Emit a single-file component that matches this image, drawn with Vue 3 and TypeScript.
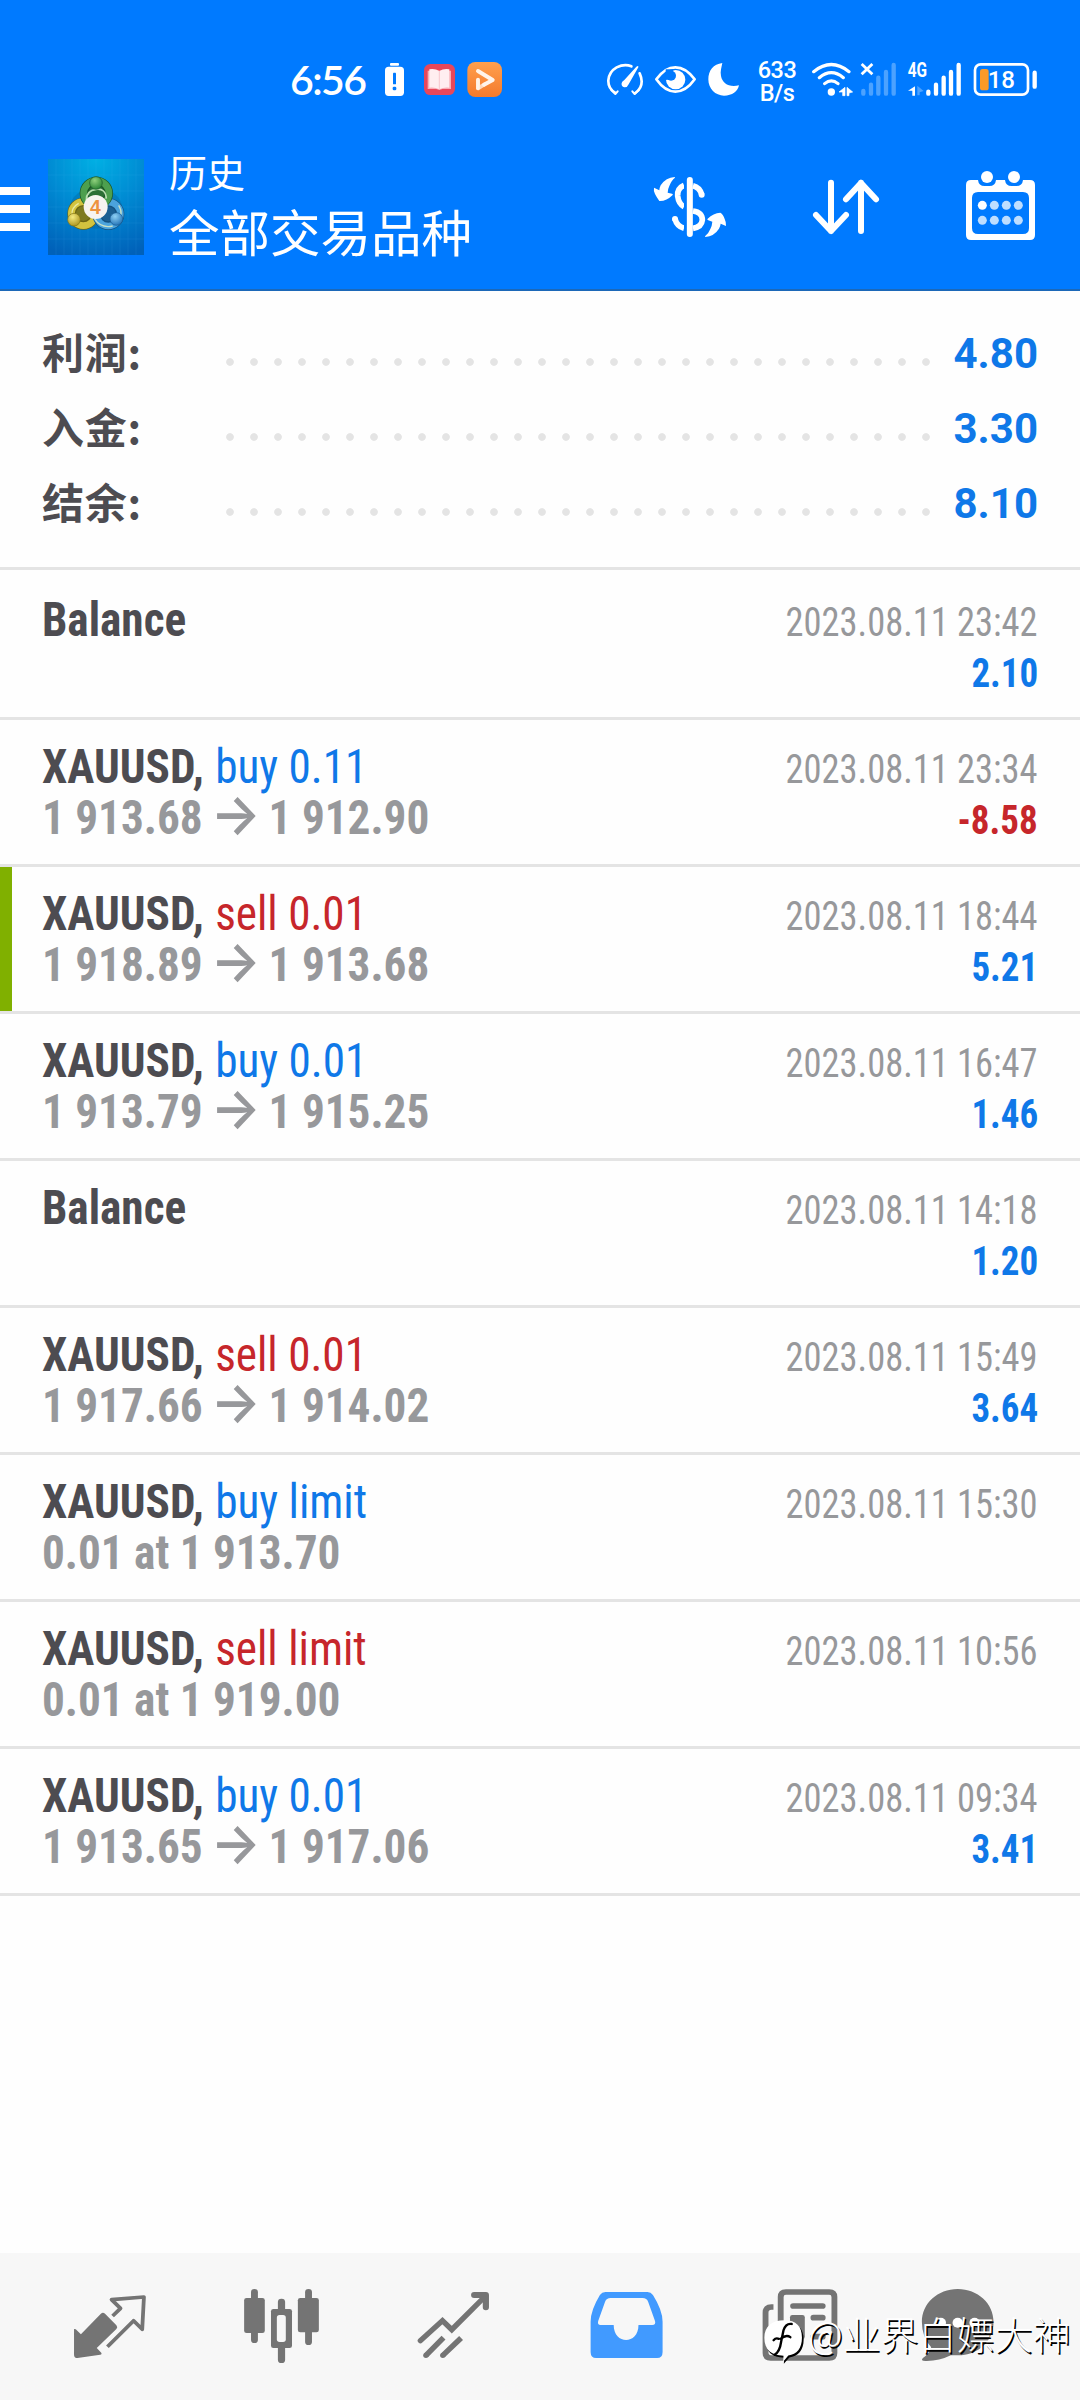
<script setup lang="ts">
interface Summary {
  label: string
  value: string
}

interface Deal {
  symbol: string
  side?: 'buy' | 'sell'
  action?: string
  from?: string
  to?: string
  note?: string
  time: string
  profit?: string
  marked?: boolean
}

const summary: Summary[] = [
  { label: '利润:', value: '4.80' },
  { label: '入金:', value: '3.30' },
  { label: '结余:', value: '8.10' },
]

const deals: Deal[] = [
  { symbol: 'Balance', time: '2023.08.11 23:42', profit: '2.10' },
  { symbol: 'XAUUSD,', side: 'buy', action: 'buy 0.11', from: '1 913.68', to: '1 912.90', time: '2023.08.11 23:34', profit: '-8.58' },
  { symbol: 'XAUUSD,', side: 'sell', action: 'sell 0.01', from: '1 918.89', to: '1 913.68', time: '2023.08.11 18:44', profit: '5.21', marked: true },
  { symbol: 'XAUUSD,', side: 'buy', action: 'buy 0.01', from: '1 913.79', to: '1 915.25', time: '2023.08.11 16:47', profit: '1.46' },
  { symbol: 'Balance', time: '2023.08.11 14:18', profit: '1.20' },
  { symbol: 'XAUUSD,', side: 'sell', action: 'sell 0.01', from: '1 917.66', to: '1 914.02', time: '2023.08.11 15:49', profit: '3.64' },
  { symbol: 'XAUUSD,', side: 'buy', action: 'buy limit', note: '0.01 at 1 913.70', time: '2023.08.11 15:30' },
  { symbol: 'XAUUSD,', side: 'sell', action: 'sell limit', note: '0.01 at 1 919.00', time: '2023.08.11 10:56' },
  { symbol: 'XAUUSD,', side: 'buy', action: 'buy 0.01', from: '1 913.65', to: '1 917.06', time: '2023.08.11 09:34', profit: '3.41' },
]

const isLoss = (profit: string): boolean => profit.startsWith('-')
</script>

<template>
  <div class="screen">
    <header class="top">
      <div class="status">
        <div class="status-left">
          <span class="clock">6:56</span>
          <svg class="s-alert" viewBox="342 63 63 111" width="21" height="37">
            <rect x="360" y="69" width="27" height="8" rx="3" fill="#fff" />
            <rect x="345" y="80" width="57" height="88" rx="11" fill="#fff" />
            <rect x="369" y="98" width="9" height="35" rx="2" fill="#007aff" />
            <rect x="368" y="140" width="11" height="11" rx="4" fill="#007aff" />
          </svg>
          <svg class="s-book" viewBox="459 63 99 111" width="33" height="37">
            <rect x="462" y="72" width="93" height="93" rx="19" fill="#e8475a" />
            <path d="M473 92h70v55h-26l-9 3-9-3h-26z" fill="#f9aeb6" />
            <path d="M478 88q17-3 30 5v55q-13-7-30-5zM538 88q-17-3-30 5v55q13-7 30-5z" fill="#ffeef0" />
            <path d="M508 93v55" stroke="#f5b5bd" stroke-width="2" />
          </svg>
          <svg class="s-play" viewBox="591 63 108 111" width="36" height="37">
            <defs>
              <linearGradient id="og" x1="0" y1="0" x2="0" y2="1">
                <stop offset="0" stop-color="#ffa04e" />
                <stop offset="1" stop-color="#f47a2c" />
              </linearGradient>
            </defs>
            <rect x="592" y="66" width="104" height="105" rx="24" fill="url(#og)" />
            <path d="M624 121v24l18-11" fill="none" stroke="#ffd9bd" stroke-width="12" stroke-linejoin="round" stroke-linecap="round" />
            <path d="M624 93l44 27-26 14" fill="none" stroke="#fff4ea" stroke-width="12" stroke-linejoin="round" stroke-linecap="round" />
            <path d="M624 119v26" stroke="#fff4ea" stroke-width="11" stroke-linecap="round" />
          </svg>
        </div>
        <div class="status-right">
          <svg viewBox="48 54 114 132" width="38" height="44">
            <path d="M75 158Q54 146 55 121Q57 95 80 82Q104 70 124 79M149 100Q160 124 151 142Q146 152 136 159" fill="none" stroke="#fff" stroke-width="8" stroke-linecap="round" />
            <path d="M64 150l12 12 7-8M146 150l-12 12-7-8" fill="none" stroke="#fff" stroke-width="6" stroke-linejoin="round" stroke-linecap="round" />
            <path d="M145 82l-29 51q-4 10-13 9-10-3-8-13 1-5 8-9l36-40q7-5 6 2z" fill="#fff" />
          </svg>
          <svg class="s-eye" viewBox="192 54 129 132" width="43" height="44">
            <path d="M199 118Q225 82 256 82Q288 82 314 118Q288 155 256 155Q225 155 199 118z" fill="none" stroke="#fff" stroke-width="8" stroke-linejoin="round" />
            <circle cx="257" cy="119" r="29" fill="#fff" />
            <circle cx="243" cy="107" r="15" fill="#007aff" />
            <path d="M227 88h24l-10 30-14 2z" fill="#007aff" />
          </svg>
          <svg class="s-moon" viewBox="351 54 99 132" width="33" height="44">
            <path d="M397 69C370 72 355 92 355 118c0 28 21 49 47 49 25 0 41-12 45-31-30 7-50-6-54-28-3-15 2-27 4-39z" fill="#fff" />
          </svg>
          <div class="speed"><span>633</span><span>B/s</span></div>
          <svg class="s-wifi" viewBox="666 54 126 132" width="42" height="44">
            <path d="M671 95Q724 52 777 95M688 113Q724 83 760 113M704 131Q724 114 744 131" fill="none" stroke="#fff" stroke-width="9.500" stroke-linecap="round" />
            <circle cx="724" cy="156" r="11" fill="#fff" />
            <path d="M765 142v25h-7v-11h-11zM771 142v25h6v-8l11-3z" fill="#fff" stroke="#fff" stroke-width="2" />
          </svg>
          <svg class="s-sig1" viewBox="810 54 111 132" width="37" height="44">
            <path d="M818 75l26 25M844 75l-26 25" stroke="#fff" stroke-width="8.500" stroke-linecap="square" />
            <path d="M820 153v8M843 134v27M865 113v48M888 96v65M911 75v86" stroke="#4ca2ff" stroke-width="13" stroke-linecap="round" />
          </svg>
          <svg class="s-sig2" viewBox="951 54 165 132" width="55" height="44">
            <text x="953" y="111" class="g4" textLength="58" lengthAdjust="spacingAndGlyphs">4G</text>
            <path d="M975 139v28h-8v-15h-13z" fill="#fff" />
            <path d="M982 137v29h7v-9l12-4z" fill="#4ca2ff" />
            <path d="M1015 155v6M1038 134v27M1061 113v48M1083 96v65M1106 75v86" stroke="#fff" stroke-width="13" stroke-linecap="round" />
          </svg>
          <svg class="s-bat" viewBox="1149 54 195 132" width="65" height="44">
            <rect x="1155" y="73" width="159" height="91" rx="17" fill="none" stroke="#fff" stroke-width="8" />
            <rect x="1170" y="87" width="26" height="64" rx="8" fill="#fb9a27" />
            <path d="M1334 98v42" stroke="#fff" stroke-width="13" stroke-linecap="round" />
            <text x="1193" y="144" class="pct" textLength="82" lengthAdjust="spacingAndGlyphs">18</text>
          </svg>
        </div>
      </div>
      <div class="toolbar">
        <div class="burger"><i></i><i></i><i></i></div>
        <svg class="logo" viewBox="24 27 288 288" width="96" height="96">
          <defs>
            <radialGradient id="lb" cx=".5" cy="0" r="1.05">
              <stop offset="0" stop-color="#00b0e4" />
              <stop offset=".5" stop-color="#0089d2" />
              <stop offset="1" stop-color="#0061b9" />
            </radialGradient>
            <radialGradient id="gg" cx=".4" cy=".3" r=".8"><stop offset="0" stop-color="#8fd07c" /><stop offset="1" stop-color="#1d7a2b" /></radialGradient>
            <radialGradient id="yg" cx=".4" cy=".3" r=".8"><stop offset="0" stop-color="#f4ea80" /><stop offset="1" stop-color="#a68c14" /></radialGradient>
            <radialGradient id="bg" cx=".4" cy=".3" r=".8"><stop offset="0" stop-color="#8fd0f4" /><stop offset="1" stop-color="#1769b0" /></radialGradient>
          </defs>
          <rect x="24" y="27" width="288" height="288" fill="url(#lb)" />
          <path d="M48 27v288M72 27v288M96 27v288M120 27v288M144 27v288M168 27v288M192 27v288M216 27v288M240 27v288M264 27v288M288 27v288M24 75h288M24 123h288M24 171h288M24 219h288M24 267h288" stroke="#5cc4f0" stroke-opacity=".2" stroke-width="1.5" />
          <ellipse cx="168" cy="174" rx="78" ry="62" fill="#024f83" opacity=".25" />
          <circle cx="130" cy="191" r="35" fill="#7d7a20" stroke="#6d6513" stroke-width="26" />
          <circle cx="130" cy="191" r="36" fill="none" stroke="#d2c33f" stroke-width="20" />
          <circle cx="205" cy="192" r="35" fill="#1b5f92" stroke="#135282" stroke-width="26" />
          <circle cx="205" cy="192" r="36" fill="none" stroke="#4ba3dc" stroke-width="20" />
          <circle cx="169" cy="130" r="37" fill="#2c6f35" stroke="#1b5728" stroke-width="26" />
          <circle cx="169" cy="130" r="38" fill="none" stroke="#4d9f4e" stroke-width="20" />
          <path d="M139 150q0-28 29-32t31 28" fill="none" stroke="#b9deb0" stroke-width="5" />
          <path d="M116 160q-22 12-20 35M218 228q-35 8-55-22M236 166q9 14 7 28" fill="none" stroke="#f2f5c0" stroke-opacity=".75" stroke-width="4" />
          <circle cx="168" cy="99" r="19" fill="url(#gg)" stroke="#1b5728" stroke-width="2" />
          <circle cx="102" cy="209" r="19" fill="url(#yg)" stroke="#847413" stroke-width="2" />
          <circle cx="229" cy="207" r="19" fill="url(#bg)" stroke="#195b91" stroke-width="2" />
          <circle cx="167" cy="171" r="36" fill="#f6f3f0" />
          <text x="166" y="192" class="four">4</text>
        </svg>
        <div class="titles">
          <span class="t1">历史</span>
          <span class="t2">全部交易品种</span>
        </div>
        <div class="tools">
          <svg viewBox="96 87 225 216" width="75" height="72">
            <path d="M164 111Q138 112 122 136Q119 142 118 151L102 143Q100 153 105 162Q110 172 118 183Q139 184 158 165Q160 162 156 161L143 158Q143 148 148 138Q154 121 165 113z" fill="#fff" />
            <path d="M256 291Q282 289 297 266Q301 259 302 251L318 258Q319 247 314 237Q310 223 301 218Q280 219 263 236Q260 240 265 241L277 245Q276 258 271 267Q265 282 255 289z" fill="#fff" />
            <path d="M192 136Q171 145 173 168Q176 192 192 200M219 137Q239 142 245 163M165 237Q171 259 192 265M219 213Q247 217 247 240Q245 261 219 265" fill="none" stroke="#fff" stroke-width="17" />
            <circle cx="245" cy="164" r="9" fill="#fff" />
            <circle cx="165" cy="237" r="9" fill="#fff" />
            <path d="M192 120h8v160h-8zM219 120h8v5h-8z" fill="#007aff" />
            <path d="M209.500 120v162" stroke="#fff" stroke-width="18" stroke-linecap="round" />
          </svg>
          <svg viewBox="576 87 204 216" width="68" height="72">
            <path d="M633 128v145M588 225l45 48 45-48M723 273V128M678 178l45-49 45 49" fill="none" stroke="#fff" stroke-width="18" stroke-linecap="round" stroke-linejoin="round" />
          </svg>
          <svg viewBox="1035 87 213 216" width="71" height="72">
            <path fill-rule="evenodd" d="M1053 120h21q2 18 20 18h14q18 0 20-18h27q2 18 20 18h14q18 0 20-18h21q15 0 15 15v150q0 15-15 15h-177q-15 0-15-15V135q0-15 15-15zM1074 156q-18 0-18 18v90q0 18 18 18h135q18 0 18-18v-90q0-18-18-18z" fill="#fff" />
            <circle cx="1101" cy="111" r="18" fill="#fff" />
            <circle cx="1182" cy="111" r="18" fill="#fff" />
            <circle cx="1087" cy="196" r="13.500" fill="#fff" />
            <g fill="#bfdeff">
              <circle cx="1123" cy="196" r="13.500" /><circle cx="1159" cy="196" r="13.500" /><circle cx="1195" cy="196" r="13.500" />
              <circle cx="1087" cy="241" r="13.500" /><circle cx="1123" cy="241" r="13.500" /><circle cx="1159" cy="241" r="13.500" /><circle cx="1195" cy="241" r="13.500" />
            </g>
          </svg>
        </div>
      </div>
    </header>

    <section class="summary">
      <div v-for="item in summary" :key="item.label" class="sum-row">
        <span class="sum-label">{{ item.label }}</span>
        <span class="dots"></span>
        <span class="sum-value">{{ item.value }}</span>
      </div>
    </section>

    <main class="list">
      <article v-for="(deal, i) in deals" :key="i" class="deal" :class="{ marked: deal.marked }">
        <div class="line">
          <div class="cell">
            <span class="symbol">{{ deal.symbol }}</span>
            <span v-if="deal.action" class="action" :class="deal.side">{{ deal.action }}</span>
          </div>
          <time class="time">{{ deal.time }}</time>
        </div>
        <div class="line">
          <div class="cell prices">
            <template v-if="deal.from">
              <span>{{ deal.from }}</span><span class="arrow">→</span><span>{{ deal.to }}</span>
            </template>
            <span v-else-if="deal.note">{{ deal.note }}</span>
          </div>
          <span v-if="deal.profit" class="profit" :class="{ loss: isLoss(deal.profit) }">{{ deal.profit }}</span>
        </div>
      </article>
    </main>

    <nav class="nav">
      <svg viewBox="203.3 141 232.3 240" preserveAspectRatio="none">
        <path d="M293 221q6-5 12 0l33 35q5 6 0 11l-57 57 13 14q3 5-3 6l-66 10q-10 0-10-10v-77l5 1 15 15z" fill="#747474" />
        <path d="M327 228l23-23-26-26 94-8-5 97-25-26-76 78" fill="none" stroke="#747474" stroke-width="11" stroke-linejoin="round" />
      </svg>
      <svg viewBox="702.8 141 232.3 240" preserveAspectRatio="none">
        <g fill="#747474">
          <rect x="729" y="147" width="20" height="162" rx="10" /><rect x="709" y="174" width="60" height="105" rx="7" />
          <rect x="886" y="147" width="20" height="168" rx="10" /><rect x="865" y="174" width="61" height="103" rx="7" />
          <rect x="807" y="176" width="21" height="193" rx="10" /><rect x="787" y="207" width="61" height="117" rx="7" />
        </g>
        <rect x="804" y="225" width="26" height="81" rx="8" fill="#f7f7f7" />
      </svg>
      <svg viewBox="1202.3 141 232.3 240" preserveAspectRatio="none">
        <path d="M1221 302l64-60 27 27 95-98" fill="none" stroke="#747474" stroke-width="16" stroke-linecap="round" stroke-linejoin="miter" />
        <path d="M1377 165h34v37" fill="none" stroke="#747474" stroke-width="18" stroke-linecap="round" stroke-linejoin="round" />
        <path d="M1390 170h20v22z" fill="#747474" />
        <path d="M1237 346l51-53M1286 346l53-52" stroke="#747474" stroke-width="16" />
        <circle cx="1237" cy="346" r="8" fill="#747474" /><circle cx="1286" cy="346" r="8" fill="#747474" />
      </svg>
      <svg viewBox="133.6 141 232.3 240" preserveAspectRatio="none">
        <path fill-rule="evenodd" d="M190 156h122q10 0 16 9 28 46 28 80v91q0 18-16 18H163q-16 0-16-18v-91q0-34 27-80 6-9 16-9zM205 174q-12 0-16 11l-20 58q-3 12 7 12h38c0 60 72 60 72 0h40q11 0 8-12l-20-58q-4-11-16-11z" fill="#419aff" />
      </svg>
      <svg viewBox="633.1 141 232.3 240" preserveAspectRatio="none">
        <path d="M678 201h-6q-17 0-17 17v121q0 15 15 15h170q15 0 15-15V171q0-15-15-15H714q-15 0-15 15v165q0 14-14 18" fill="none" stroke="#747474" stroke-width="17" />
        <path d="M735 198h86M794 233h27M794 290h27" stroke="#747474" stroke-width="17" stroke-linecap="round" />
        <rect x="726" y="225" width="43" height="72" rx="7" fill="#747474" />
      </svg>
      <svg class="chat" viewBox="1097.7 141 232.3 240" preserveAspectRatio="none">
        <path d="M1213 147c58 0 104 43 104 99 0 59-46 100-104 100h-20q-35 18-74 17-15 0-7-9 20-14 24-32-27-31-27-76c0-56 46-99 104-99z" fill="#747474" />
        <circle cx="1164" cy="248" r="15" fill="#fff" /><circle cx="1213" cy="248" r="15" fill="#fff" /><circle cx="1262" cy="248" r="15" fill="#fff" />
      </svg>
      <div class="mark">
        <svg viewBox="648 238 120 136" width="41" height="45" preserveAspectRatio="none">
          <path d="M711 244c34 0 53 18 53 52 0 33-17 52-42 54l-16 19 1-18c-36 0-54-18-54-54 0-35 22-53 58-53z" fill="#000" transform="translate(3 4)" />
          <path d="M711 242c34 0 51 18 51 52 0 33-15 52-40 54l-15 19 1-18c-36 0-56-18-56-54 0-35 22-53 59-53z" fill="#fff" />
          <path d="M679 302q7-8 15-4M682 346q15-9 19-39l7-35q7-22 24-19M699 298q17-14 29-5" fill="none" stroke="#000" stroke-width="7" stroke-linecap="round" />
        </svg>
        <span>@业界白嫖大神</span>
      </div>
    </nav>
  </div>
</template>

<style>
body {
  margin: 0;
  background: #fefefe;
}
</style>

<style scoped>
.screen {
  width: 1080px;
  height: 2400px;
  display: flex;
  flex-direction: column;
  overflow: hidden;
  background: #fefefe;
  font-family: "Roboto Condensed", Roboto, "Noto Sans CJK SC", sans-serif;
}
svg {
  display: block;
  flex: none;
}
.top {
  box-sizing: border-box;
  height: 291px;
  background: #007aff;
  border-bottom: 2px solid #1c68b8;
}
.status {
  height: 120px;
  display: flex;
  justify-content: space-between;
  padding: 0 42px 0 290px;
}
.status-left {
  display: flex;
  align-items: flex-start;
  padding-top: 61px;
}
.clock {
  width: 94px;
  margin-top: -6px;
  font: 600 41px/50px Lato, sans-serif;
  letter-spacing: -1.6px;
  color: #fff;
}
.s-book {
  margin-left: 18px;
}
.s-play {
  margin-left: 11px;
}
.status-right {
  display: flex;
  padding-top: 58px;
}
.s-eye,
.s-moon {
  margin-left: 10px;
}
.speed {
  width: 42px;
  margin: 0 0 0 16px;
  padding-top: 1px;
  display: flex;
  flex-direction: column;
  align-items: center;
  font: 500 23.5px/22.5px Roboto, sans-serif;
  letter-spacing: -0.5px;
  color: #fff;
}
.s-wifi {
  margin-left: 14px;
}
.s-sig1 {
  margin-left: 6px;
}
.s-sig2 {
  margin-left: 10px;
}
.s-bat {
  margin-left: 11px;
}
.g4 {
  font: 700 58px Roboto, sans-serif;
  fill: #fff;
}
.pct {
  font: 500 72px Roboto, sans-serif;
  fill: #fff;
}
.toolbar {
  display: flex;
  align-items: flex-start;
}
.burger {
  width: 30px;
  margin-top: 67px;
  display: flex;
  flex-direction: column;
  gap: 10px;
}
.burger i {
  height: 8px;
  background: #fff;
}
.logo {
  margin: 39px 0 0 18px;
}
.four {
  font: 700 58px "Liberation Sans", sans-serif;
  fill: #ed923e;
  text-anchor: middle;
}
.titles {
  flex: 1;
  display: flex;
  flex-direction: column;
  padding: 26px 0 0 25px;
  color: #fff;
  font-family: "Noto Sans CJK SC", sans-serif;
}
.t1 {
  font-size: 38px;
  line-height: 49px;
}
.t2 {
  font-size: 50.5px;
  line-height: 70px;
}
.tools {
  display: flex;
  gap: 85px;
  padding: 49px 44px 0 0;
}
.summary {
  box-sizing: border-box;
  height: 279px;
  padding: 25px 42px 0;
  border-bottom: 3px solid #e4e4e4;
}
.sum-row {
  display: flex;
  height: 75px;
  align-items: flex-start;
}
.sum-label {
  width: 184px;
  font: 700 42px/70px "Noto Sans CJK SC", sans-serif;
  letter-spacing: 0.8px;
  color: #4d4c51;
}
.dots {
  width: 720px;
  height: 8px;
  margin: 42px 0 0 -8px;
  background: radial-gradient(circle at 12px 4px, #e4e4e4 3.4px, transparent 4.2px) 0 0 / 24px 8px;
}
.sum-value {
  flex: 1;
  text-align: right;
  font: 700 42px/76px Roboto, sans-serif;
  color: #0f78e8;
}
.list {
  padding-top: 3px;
}
.deal {
  box-sizing: border-box;
  height: 147px;
  padding: 21px 42px 0;
  border-bottom: 3px solid #e4e4e4;
}
.marked {
  box-shadow: inset 12px 0 #80b000;
}
.line {
  display: flex;
  justify-content: space-between;
  align-items: baseline;
  height: 51px;
  font-size: 48px;
  line-height: 51px;
  font-stretch: 75%;
  white-space: nowrap;
}
.cell {
  display: flex;
  align-items: baseline;
  transform: scaleX(0.942);
  transform-origin: left;
}
.cell::before {
  content: "\200b";
}
.symbol {
  font-weight: 700;
  color: #4d4c51;
}
.action {
  margin-left: 12px;
}
.buy {
  color: #0f78e8;
}
.sell {
  color: #c6262b;
}
.prices {
  font-weight: 700;
  color: #97989b;
}
.arrow {
  width: 70px;
  display: flex;
  justify-content: center;
  font-family: Inter, sans-serif;
  font-size: 56px;
  font-weight: 600;
  line-height: 0;
}
.time {
  font-size: 40px;
  color: #97989b;
  transform: scaleX(0.911);
  transform-origin: right;
}
.profit {
  font-size: 40px;
  font-weight: 700;
  color: #0f78e8;
  transform: scaleX(0.925);
  transform-origin: right;
}
.loss {
  color: #c6262b;
}
.nav {
  position: relative;
  box-sizing: border-box;
  height: 147px;
  margin-top: auto;
  padding: 34px 0 0 70px;
  display: flex;
  gap: 92px;
  background: #f7f7f7;
}
.nav > svg {
  width: 80px;
  height: 80px;
}
.nav > .chat {
  margin-left: -12px;
}
.mark {
  position: absolute;
  left: 763px;
  top: 66px;
  display: flex;
  white-space: nowrap;
}
.mark span {
  margin: -6px 0 0 4px;
  font: 300 38px/40px "Noto Sans CJK SC", sans-serif;
  color: #fff;
  text-shadow: 1.5px 1.5px 0 #000;
}
</style>
